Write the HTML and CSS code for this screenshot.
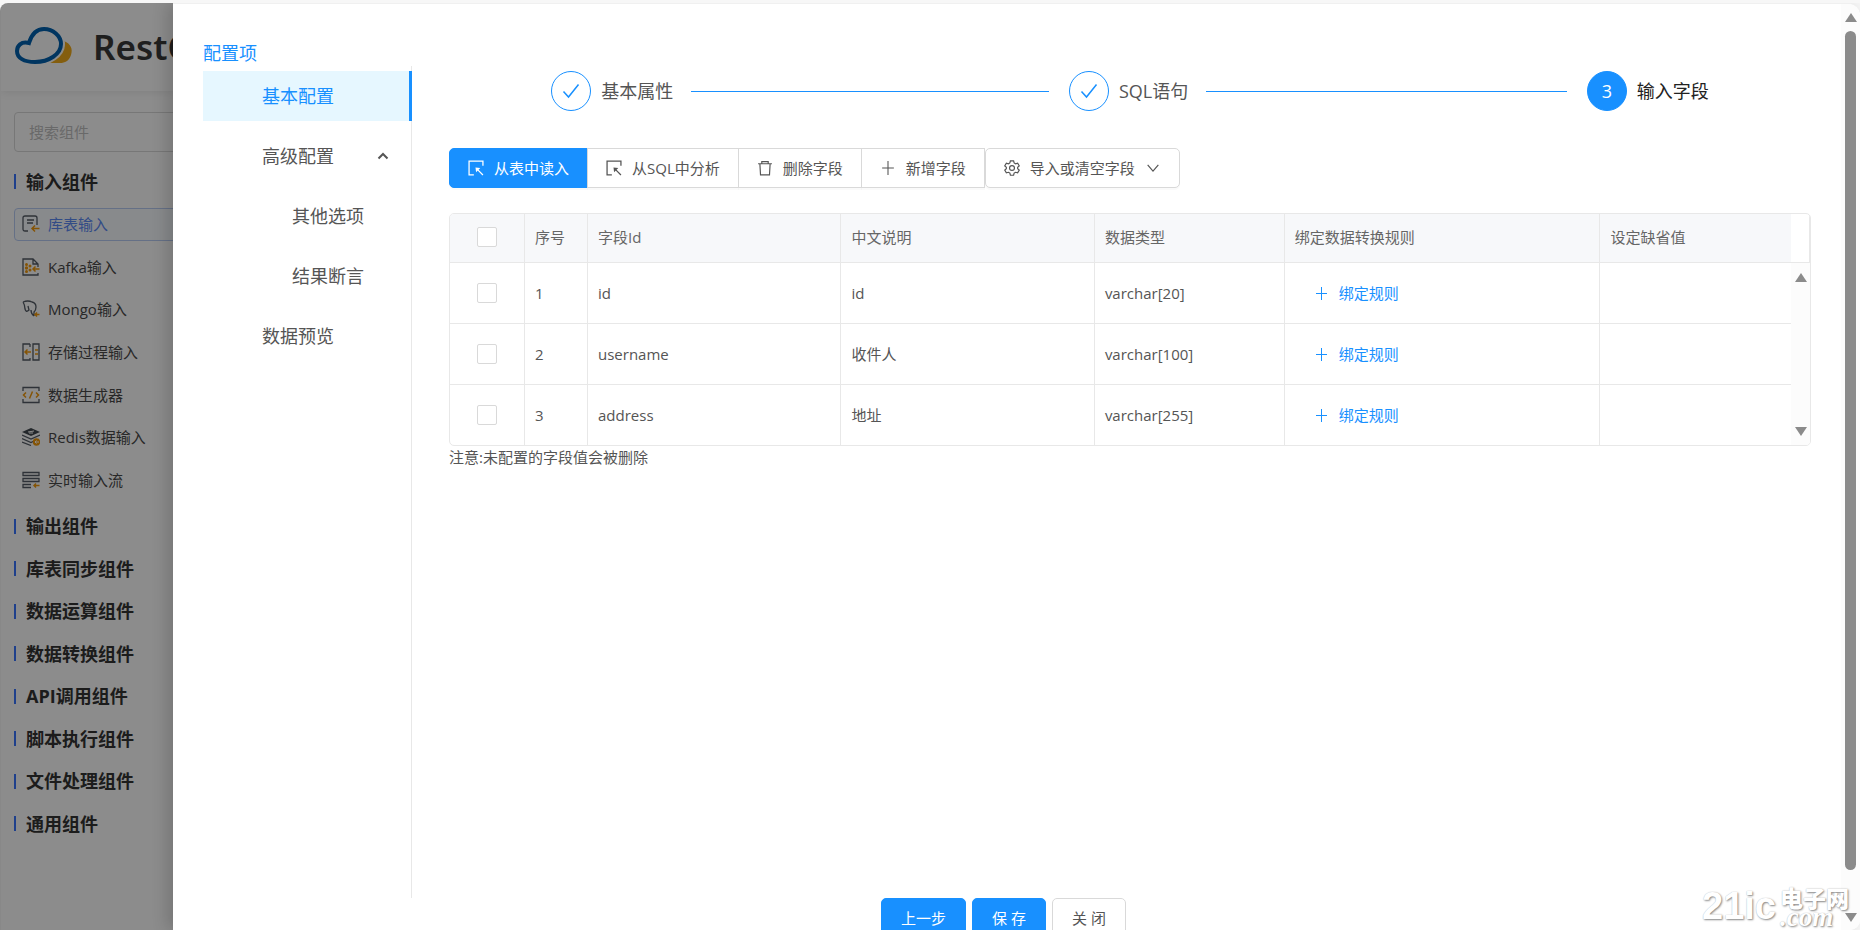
FILE: index.html
```html
<!DOCTYPE html>
<html lang="zh-CN">
<head>
<meta charset="utf-8">
<title>RestCloud</title>
<link rel="stylesheet" href="styles.css">
</head>
<body>
<svg class="defs" aria-hidden="true">
  <symbol id="select" viewBox="0 0 15 15"><path d="M5.500 14H1V1h13v4.500M9 9l5 5" fill="none" stroke="currentColor" stroke-width="1.200"/><path d="M7 7l4.500.6L7.600 11.500z" fill="currentColor"/></symbol>
  <symbol id="trash" viewBox="0 0 15 15"><path d="M1 3.500h13M4.500 3.500v-2h6v2M2.700 3.500l.6 10.500h8.400l.6-10.500" fill="none" stroke="currentColor" stroke-width="1.100"/></symbol>
  <symbol id="plus" viewBox="0 0 15 15"><path d="M7.500 1v13M2 7.500h11" fill="none" stroke="currentColor"/></symbol>
  <symbol id="gear" viewBox="0 0 15 15"><path d="M6 .8h3l.5 2 1.300.8 2-.6 1.500 2.600-1.500 1.300v1.300l1.500 1.300-1.500 2.600-2-.6-1.300.8-.5 2H6l-.5-2-1.300-.8-2 .6L.700 9.500l1.500-1.300V6.900L.700 5.600 2.200 3l2 .6 1.300-.8z" fill="none" stroke="currentColor" stroke-width="1.100"/><circle cx="7.500" cy="7.500" r="2.300" fill="none" stroke="currentColor" stroke-width="1.100"/></symbol>
  <symbol id="down" viewBox="0 0 15 15"><path d="M2.500 4.500l5 6 5-6" fill="none" stroke="currentColor" stroke-width="1.100"/></symbol>
  <symbol id="check" viewBox="0 0 18 18"><path d="M1.500 9.500l5 5.500L16.500 2.500" fill="none" stroke="currentColor" stroke-width="1.500"/></symbol>
</svg>
<div class="app">
  <header class="brand">
    <svg class="brand-logo" viewBox="0 0 60 42">
      <path d="M49 15C56 18 58 23 56 29C54 35 50 37 45 37H31C41 35 49 27 50 17z" fill="#f0ac1c"/>
      <path d="M14 17C17 7 23 3 29 3C38 3 46 10 46 18C46 28 34 36 20 36C9 36 2 32 2 25C2 20 6 15 14 17z" fill="#fff" stroke="#fff" stroke-width="8"/>
      <path d="M14 17C17 7 23 3 29 3C38 3 46 10 46 18C46 28 34 36 20 36C9 36 2 32 2 25C2 20 6 15 14 17z" fill="#fff" stroke="#0061b0" stroke-width="4"/>
    </svg>
    <span class="brand-name">RestCloud</span>
  </header>
  <aside class="palette">
    <input class="search" type="text" placeholder="搜索组件" aria-label="搜索组件">
    <h2 class="group first">输入组件</h2>
    <ul class="components">
      <li><a href="#" class="component selected"><svg viewBox="0 0 18 18"><path d="M6 16H3q-2 0-2-2V3q0-2 2-2h10q2 0 2 2v7M5 5h7M5 8h6" class="ln"/><path d="M17.500 13.500H10M13 10.500l-3 3 3 3" class="or"/></svg>库表输入</a></li>
      <li><a href="#" class="component"><svg viewBox="0 0 18 18"><path d="M16 15v2H1V1h10l5 5v3M11 1v5h5" class="ln"/><path d="M17.500 11H11M13.500 8.500L11 11l2.500 2.500" class="or"/><g fill="#f39a0b"><circle cx="4.500" cy="6.500" r="1.500"/><circle cx="4.500" cy="10" r="1.700"/><circle cx="4.500" cy="13.500" r="1.500"/><circle cx="8" cy="8" r="1.500"/><circle cx="8" cy="12" r="1.500"/></g></svg>Kafka输入</a></li>
      <li><a href="#" class="component"><svg viewBox="0 0 18 18"><path d="M1 2q5-2 9 0 4 1 4 5 0 3-2 5v4M1 2q2 3 2 7 1 4 4 1l-1-4M9 10q0 4 3 6" class="ln"/><path d="M17.500 14.500H13M15 12.500l-2 2 2 2" class="or"/></svg>Mongo输入</a></li>
      <li><a href="#" class="component"><svg viewBox="0 0 18 18"><path d="M8 1H1v16h7v-2M8 1v3M11 1h6v16h-6z" class="ln"/><path d="M9 9H3M5.500 6.500L3 9l2.500 2.500M13 7h3M13 11h3" class="or"/></svg>存储过程输入</a></li>
      <li><a href="#" class="component"><svg viewBox="0 0 18 18"><path d="M1 5V1.500h16V5M1 13v3.500h16V13" class="ln"/><path d="M4 6.500L1.500 9 4 11.500M14 6.500L16.500 9 14 11.500M10.500 5.500l-3 7" class="or"/></svg>数据生成器</a></li>
      <li><a href="#" class="component"><svg viewBox="0 0 18 18"><path d="M9 0l9 4-9 4-9-4z" fill="#424950"/><path d="M6 4l6-1M7 5h4" stroke="#fff"/><path d="M0 7l9 4 9-4M0 10.500l9 4 4-2M0 14l9 3.500" class="ln"/><circle cx="14.500" cy="14" r="3.700" fill="#f39a0b"/><path d="M17 14h-4M14.500 12.500L13 14l1.500 1.500" stroke="#fff" fill="none"/></svg>Redis数据输入</a></li>
      <li><a href="#" class="component"><svg viewBox="0 0 18 18"><path d="M1 1.500h16v3H1zM1 7.500h16v3H1zM9 13.500H1v3h8" class="ln"/><path d="M17.500 14.500H12M14 12.500l-2 2 2 2" class="or"/></svg>实时输入流</a></li>
    </ul>
    <div class="groups">
      <h2 class="group">输出组件</h2>
      <h2 class="group">库表同步组件</h2>
      <h2 class="group">数据运算组件</h2>
      <h2 class="group">数据转换组件</h2>
      <h2 class="group">API调用组件</h2>
      <h2 class="group">脚本执行组件</h2>
      <h2 class="group">文件处理组件</h2>
      <h2 class="group">通用组件</h2>
    </div>
  </aside>
</div>
<div class="mask"></div>
<section class="drawer">
  <div class="drawer-main">
    <div class="drawer-body">
      <nav class="config">
        <div class="config-title">配置项</div>
        <ul class="menu">
          <li><a href="#" class="menu-item active">基本配置</a></li>
          <li><a href="#" class="menu-item">高级配置<svg class="caret" viewBox="0 0 12 12"><path d="M1.500 8.500L6 4l4.500 4.500" fill="none" stroke="currentColor" stroke-width="2"/></svg></a></li>
          <li><a href="#" class="menu-item child">其他选项</a></li>
          <li><a href="#" class="menu-item child">结果断言</a></li>
          <li><a href="#" class="menu-item">数据预览</a></li>
        </ul>
      </nav>
      <main class="content">
        <ol class="steps">
          <li class="step"><span class="step-dot"><svg class="tick"><use href="#check"/></svg></span><span>基本属性</span></li>
          <li class="step"><span class="step-dot"><svg class="tick"><use href="#check"/></svg></span><span>SQL语句</span></li>
          <li class="step current"><span class="step-dot">3</span><span>输入字段</span></li>
        </ol>
        <div class="toolbar">
          <button type="button" class="btn primary"><svg class="ico"><use href="#select"/></svg>从表中读入</button>
          <button type="button" class="btn"><svg class="ico"><use href="#select"/></svg>从SQL中分析</button>
          <button type="button" class="btn"><svg class="ico"><use href="#trash"/></svg>删除字段</button>
          <button type="button" class="btn"><svg class="ico"><use href="#plus"/></svg>新增字段</button>
          <button type="button" class="btn menu-btn"><svg class="ico"><use href="#gear"/></svg>导入或清空字段<svg class="ico"><use href="#down"/></svg></button>
        </div>
        <div class="grid">
          <table class="fields">
            <thead>
              <tr><th class="c-check"><input type="checkbox" aria-label="全选"></th><th class="c-no">序号</th><th class="c-id">字段Id</th><th class="c-name">中文说明</th><th class="c-type">数据类型</th><th class="c-rule">绑定数据转换规则</th><th>设定缺省值</th></tr>
            </thead>
            <tbody>
              <tr><td class="c-check"><input type="checkbox" aria-label="选择 id"></td><td>1</td><td>id</td><td>id</td><td>varchar[20]</td><td><a href="#" class="rule"><svg class="ico"><use href="#plus"/></svg>绑定规则</a></td><td></td></tr>
              <tr><td class="c-check"><input type="checkbox" aria-label="选择 username"></td><td>2</td><td>username</td><td>收件人</td><td>varchar[100]</td><td><a href="#" class="rule"><svg class="ico"><use href="#plus"/></svg>绑定规则</a></td><td></td></tr>
              <tr><td class="c-check"><input type="checkbox" aria-label="选择 address"></td><td>3</td><td>address</td><td>地址</td><td>varchar[255]</td><td><a href="#" class="rule"><svg class="ico"><use href="#plus"/></svg>绑定规则</a></td><td></td></tr>
            </tbody>
          </table>
          <div class="gutter">
            <div class="gutter-head"></div>
            <div class="gutter-track"><i class="arrow up"></i><i class="arrow down"></i></div>
          </div>
        </div>
        <p class="note">注意:未配置的字段值会被删除</p>
      </main>
    </div>
    <footer class="actions">
      <button type="button" class="btn primary">上一步</button>
      <button type="button" class="btn primary">保 存</button>
      <button type="button" class="btn">关 闭</button>
    </footer>
  </div>
  <div class="scrollbar"><i class="arrow up"></i><div class="thumb"></div><i class="arrow down"></i></div>
</section>
<div class="watermark"><span class="wm-main">21ic</span><span class="wm-side"><span class="wm-cn">电子网</span><span class="wm-com">.com</span></span></div>
</body>
</html>
```
FILE: styles.css
```css
* { box-sizing: border-box; }
body {
  margin: 0;
  height: 100vh;
  overflow: hidden;
  position: relative;
  display: flex;
  padding-top: 3px;
  background: #f7f7f7;
  color: #555;
  font: 15px/24px "Open Sans", "Noto Sans CJK SC", sans-serif;
}
ul, ol { list-style: none; margin: 0; padding: 0; }
a { color: inherit; text-decoration: none; }
.defs { position: absolute; width: 0; height: 0; }

.app { width: 172px; margin-left: 1px; overflow: hidden; background: #fff; border-top-left-radius: 8px; flex: none; }
.brand { display: flex; align-items: center; gap: 18px; height: 88px; padding-left: 14px; box-shadow: 0 2px 8px rgba(0, 0, 0, .08); }
.brand-logo { width: 60px; height: 42px; flex: none; }
.brand-name { font: 600 35px/44px "Noto Sans", sans-serif; color: #3a3a3a; }
.palette { width: 240px; padding: 21px 13px 0; }
.search { display: block; width: 100%; height: 40px; padding: 0 14px; border: 1px solid #d9d9d9; border-radius: 4px; background: transparent; font: inherit; }
.search::placeholder { color: #bfbfbf; opacity: 1; }
.group { display: flex; align-items: center; gap: 10px; margin: 0; font-size: 18px; line-height: 24px; font-weight: 700; color: #333; }
.group::before { content: ""; width: 2px; height: 15px; background: #3a75ff; }
.group.first { height: 59px; margin-bottom: -8px; }
.components { display: grid; grid-auto-rows: 1fr; align-items: center; height: 298px; }
.component { display: flex; align-items: center; gap: 8px; height: 33px; padding-left: 7px; border: 1px solid transparent; border-radius: 4px; color: #4a4a4a; white-space: nowrap; }
.component svg { width: 18px; height: 18px; flex: none; }
.component.selected { border-color: #b9cdf5; background: #f8fbff; color: #5b8af5; }
.ln { fill: none; stroke: #555c66; stroke-width: 1.3; }
.or { fill: none; stroke: #f39a0b; stroke-width: 1.5; }
.groups { display: grid; grid-auto-rows: 1fr; height: 340px; margin-top: 4px; }
.mask { position: absolute; inset: 3px 0 0 0; background: rgba(0, 0, 0, .45); border-top-left-radius: 8px; border-top-right-radius: 12px; clip-path: inset(0 50% 0 0); }

.drawer { position: relative; flex: 1; min-width: 0; display: flex; background: #fff; border-top: 1px solid #f0f0f0; border-radius: 0 12px 10px 0; box-shadow: -6px 0 16px rgba(0, 0, 0, .16); clip-path: inset(0 0 0 -24px); }
.drawer-main { flex: 1; min-width: 0; display: flex; flex-direction: column; }
.drawer-body { flex: 1; min-height: 0; display: flex; gap: 37px; padding: 36px 23px 0 30px; }
.config { width: 209px; flex: none; display: flex; flex-direction: column; font-size: 18px; }
.config-title { color: #1890ff; line-height: 26px; }
.menu { flex: 1; display: flex; flex-direction: column; gap: 10px; padding-top: 5px; border-right: 1px solid #e8e8e8; }
.menu-item { display: flex; align-items: center; justify-content: space-between; height: 50px; margin-right: -1px; padding: 0 20px 0 59px; border-right: 3px solid transparent; }
.menu-item.child { padding-left: 89px; }
.menu-item.active { background: #e6f7ff; border-right-color: #1890ff; color: #1890ff; }
.caret { width: 12px; height: 12px; }

.content { flex: 1; min-width: 0; padding-top: 31px; }
.steps { display: flex; width: 85%; margin: 0 auto; font-size: 18px; }
.step { flex: 1; display: flex; align-items: center; gap: 10px; white-space: nowrap; }
.step:not(.current)::after { content: ""; flex: 1; height: 1px; margin: 0 20px 0 8px; background: #1890ff; }
.step.current { flex: none; color: #222; }
.step-dot { display: flex; align-items: center; justify-content: center; width: 40px; height: 40px; border: 1px solid #1890ff; border-radius: 50%; color: #1890ff; }
.current .step-dot { background: #1890ff; color: #fff; }
.tick { width: 18px; height: 18px; }

.toolbar { display: flex; margin: 37px 0 25px; }
.btn { display: flex; align-items: center; gap: 10px; height: 40px; padding: 0 18px; border: 1px solid #d9d9d9; border-radius: 5px; background: #fff; color: #555; font: inherit; white-space: nowrap; box-shadow: 0 2px 0 rgba(0, 0, 0, .02); }
.btn.primary { background: #1890ff; border-color: #1890ff; color: #fff; }
.ico { width: 15px; height: 15px; flex: none; }
.toolbar .ico { width: 16px; height: 16px; }
.toolbar .btn { margin-left: -1px; border-radius: 0; }
.toolbar .btn.primary { margin-left: 0; border-radius: 5px 0 0 5px; }
.toolbar .menu-btn { margin-left: 0; border-radius: 5px; }

.grid { display: flex; border: 1px solid #e8e8e8; border-radius: 5px; overflow: hidden; }
.fields { flex: 1; width: 100%; border-collapse: separate; border-spacing: 0; table-layout: fixed; }
.fields th { height: 49px; padding: 0 10px 2px; background: #f7f8fa; border-bottom: 1px solid #e8e8e8; text-align: left; font-weight: 400; color: #666; }
.fields td { height: 61px; padding: 0 10px; border-bottom: 1px solid #e8e8e8; }
.fields tbody tr:last-child td { height: 60px; border-bottom: 0; }
.fields th:not(:last-child), .fields td:not(:last-child) { border-right: 1px solid #e8e8e8; }
.fields .c-check { width: 75px; text-align: center; }
.fields .c-no { width: 63px; }
.c-id, .c-name { width: 18.9%; }
.c-type { width: 14.15%; }
.c-rule { width: 23.55%; }
.fields input { appearance: none; display: block; width: 20px; height: 20px; margin: 0 auto; border: 1px solid #d9d9d9; border-radius: 2px; background: #fff; }
.rule { display: flex; align-items: center; gap: 10px; padding-left: 19px; color: #1890ff; }
.gutter { width: 19px; flex: none; display: flex; flex-direction: column; }
.gutter-head { height: 49px; border-bottom: 1px solid #e8e8e8; border-right: 1px solid #e8e8e8; }
.gutter-track { flex: 1; display: flex; flex-direction: column; align-items: center; justify-content: space-between; padding: 10px 0 9px; background: #fcfcfc; }
.arrow { border: 6px solid transparent; }
.arrow.up { border-top: 0; border-bottom: 9px solid #8b8b8b; }
.arrow.down { border-bottom: 0; border-top: 9px solid #8b8b8b; }
.note { margin: 0; line-height: 22px; }

.actions { display: flex; justify-content: center; gap: 6px; height: 32px; overflow: hidden; }
.actions .btn { flex: none; padding: 0 19px; }
.scrollbar { width: 19px; margin-right: 0; margin-left: 7px; display: flex; flex-direction: column; align-items: center; gap: 9px; padding: 9px 0 8px; background: #fcfcfc; border-radius: 0 12px 10px 0; }
.thumb { flex: 1; width: 11px; margin-bottom: 34px; border-radius: 6px; background: #8b8b8b; }

.watermark { position: absolute; right: 11px; bottom: 3px; display: flex; align-items: center; gap: 4px; color: #fff; text-shadow: 1px 1px 2px #888, 0 0 1px #bbb; }
.wm-main { font: 700 38px/42px "Liberation Sans Narrow", "Liberation Sans", sans-serif; }
.wm-side { display: flex; flex-direction: column; }
.wm-cn { font: 900 23px/22px "Noto Sans CJK SC", sans-serif; }
.wm-com { font: italic 700 27px/18px "Liberation Serif", serif; }
```
